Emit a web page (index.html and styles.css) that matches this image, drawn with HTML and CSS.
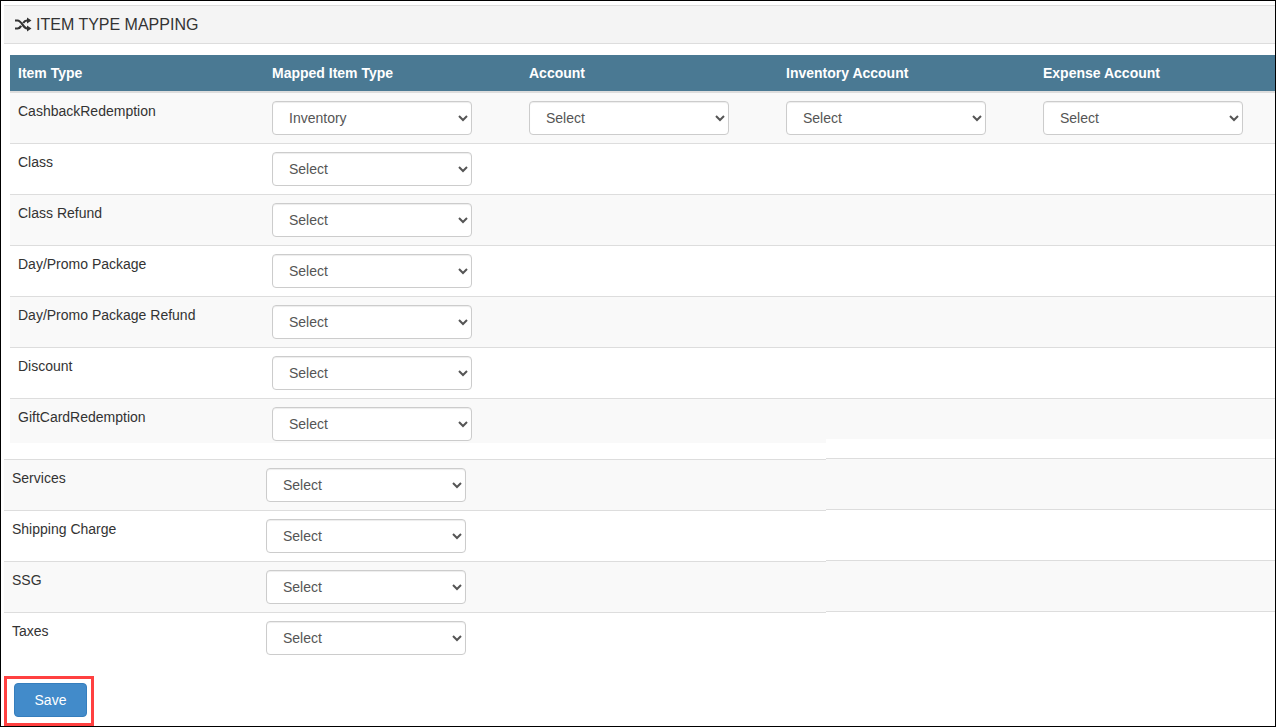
FILE: index.html
```html
<!doctype html>
<html lang="en">
    <head>
        <meta charset="utf-8">
        <meta name="viewport" content="width=device-width,initial-scale=1.0">
        <title>Item Type Mapping</title>
        <link rel="stylesheet" href="styles.css">
    </head>
    <body>

        <header class="panel-heading">
            <svg class="icon-random" viewBox="0 0 16 16" aria-hidden="true">
                <path class="line" d="M0 3.500h2.500C7 3.500 8 11.500 12 11.500h1.500M0 11.500h2.500c1.600 0 2.700-1 3.600-2.600M8.200 6C9.200 4.400 10.200 3.500 12 3.500h1.500"/>
                <path class="head" d="M12 .5l4.500 3-4.500 3zM12 8.500l4.500 3-4.500 3z"/>
            </svg>
            <h1>ITEM TYPE MAPPING</h1>
        </header>

        <form>
            <table class="mapping">
                <colgroup>
                    <col class="col-name"><col class="col-field"><col class="col-field"><col class="col-field"><col>
                </colgroup>
                <thead>
                    <tr>
                        <th>Item Type</th>
                        <th>Mapped Item Type</th>
                        <th>Account</th>
                        <th>Inventory Account</th>
                        <th>Expense Account</th>
                    </tr>
                </thead>
                <tbody>
                    <tr>
                        <td><label for="cashback">CashbackRedemption</label></td>
                        <td><select id="cashback" class="form-control"><option>Inventory</option><option>Select</option></select></td>
                        <td><select class="form-control" aria-label="Account"><option>Select</option></select></td>
                        <td><select class="form-control" aria-label="Inventory Account"><option>Select</option></select></td>
                        <td><select class="form-control" aria-label="Expense Account"><option>Select</option></select></td>
                    </tr>
                    <tr>
                        <td><label for="class">Class</label></td>
                        <td colspan="4"><select id="class" class="form-control"><option>Select</option><option>Inventory</option></select></td>
                    </tr>
                    <tr>
                        <td><label for="class-refund">Class Refund</label></td>
                        <td colspan="4"><select id="class-refund" class="form-control"><option>Select</option><option>Inventory</option></select></td>
                    </tr>
                    <tr>
                        <td><label for="package">Day/Promo Package</label></td>
                        <td colspan="4"><select id="package" class="form-control"><option>Select</option><option>Inventory</option></select></td>
                    </tr>
                    <tr>
                        <td><label for="package-refund">Day/Promo Package Refund</label></td>
                        <td colspan="4"><select id="package-refund" class="form-control"><option>Select</option><option>Inventory</option></select></td>
                    </tr>
                    <tr>
                        <td><label for="discount">Discount</label></td>
                        <td colspan="4"><select id="discount" class="form-control"><option>Select</option><option>Inventory</option></select></td>
                    </tr>
                    <tr class="cut">
                        <td><label for="giftcard">GiftCardRedemption</label></td>
                        <td colspan="4"><select id="giftcard" class="form-control"><option>Select</option><option>Inventory</option></select></td>
                    </tr>
                </tbody>
            </table>

            <div class="more">
                <table class="mapping">
                    <colgroup>
                        <col class="col-name"><col>
                    </colgroup>
                    <tbody>
                        <tr>
                            <td><label for="services">Services</label></td>
                            <td><select id="services" class="form-control"><option>Select</option><option>Inventory</option></select></td>
                        </tr>
                        <tr>
                            <td><label for="shipping">Shipping Charge</label></td>
                            <td><select id="shipping" class="form-control"><option>Select</option><option>Inventory</option></select></td>
                        </tr>
                        <tr>
                            <td><label for="ssg">SSG</label></td>
                            <td><select id="ssg" class="form-control"><option>Select</option><option>Inventory</option></select></td>
                        </tr>
                        <tr>
                            <td><label for="taxes">Taxes</label></td>
                            <td><select id="taxes" class="form-control"><option>Select</option><option>Inventory</option></select></td>
                        </tr>
                    </tbody>
                </table>
                <div class="stripes">
                    <div></div>
                    <div></div>
                    <div></div>
                    <div></div>
                </div>
            </div>

            <div class="highlight">
                <button type="button" class="btn-save">Save</button>
            </div>
        </form>

    </body>
</html>
```
FILE: styles.css
```css
*{
    box-sizing: border-box;
}
body{
    margin: 0;
    min-height: 100vh;
    padding: 4px 0 0;
    border: 1px solid #000;
    background-color: #fff;
    color: #333;
    font: 14px/20px "Liberation Sans", Arial, sans-serif;
}

/* heading */
.panel-heading{
    display: flex;
    align-items: center;
    gap: 5px;
    height: 39px;
    margin-left: 3px;
    padding-left: 11px;
    border-top: 1px solid #ddd;
    border-bottom: 1px solid #ddd;
    background-color: #f4f4f4;
}
.panel-heading h1{
    margin: 0;
    font-size: 16px;
    font-weight: normal;
}
.icon-random{
    width: 16px;
    height: 16px;
    overflow: visible;
}
.icon-random .line{
    fill: none;
    stroke: #333;
    stroke-width: 2.2;
}
.icon-random .head{
    fill: #333;
}

/* tables */
form{
    padding: 11px 0 0 9px;
}
.mapping{
    width: 100%;
    table-layout: fixed;
    border-spacing: 0;
}
.col-name{
    width: 254px;
}
.col-field{
    width: 257px;
}
.mapping th{
    padding: 8px;
    border-bottom: 2px solid #ddd;
    background-color: #4a7993;
    color: #fff;
    text-align: left;
}
.mapping td{
    padding: 8px;
    border-top: 1px solid #ddd;
    vertical-align: top;
}
.mapping thead + tbody tr:first-child td{
    border-top: 0;
}
.mapping tbody tr:nth-child(odd){
    background-color: #f9f9f9;
}
.mapping .cut td{
    padding-bottom: 2px;
}
.form-control{
    display: block;
    width: 200px;
    height: 34px;
    padding: 6px 12px;
    border: 1px solid #ccc;
    border-radius: 4px;
    background-color: #fff;
    box-shadow: inset 0 1px 1px rgba(0,0,0,.075);
    color: #555;
    font: inherit;
}

/* last rows, with the right part one line higher */
.more{
    display: flex;
    margin: 16px 0 0 -6px;
}
.more .mapping{
    flex: 0 0 822px;
    width: 822px;
}
.stripes{
    flex: 1;
    margin-top: -20px;
    padding-top: 19px;
    background-color: #fff;
}
.stripes div{
    height: 51px;
    border-top: 1px solid #ddd;
}
.stripes div:nth-child(odd){
    background-color: #f9f9f9;
}

/* save */
.highlight{
    width: fit-content;
    margin: 13px 0 0 -6px;
    padding: 4px 4px 6px 7px;
    border: 3px solid #ff4040;
}
.btn-save{
    display: block;
    width: 73px;
    height: 34px;
    padding: 6px 12px;
    border: 1px solid #357ebd;
    border-radius: 4px;
    background-color: #428bca;
    color: #fff;
    font: inherit;
}
```
